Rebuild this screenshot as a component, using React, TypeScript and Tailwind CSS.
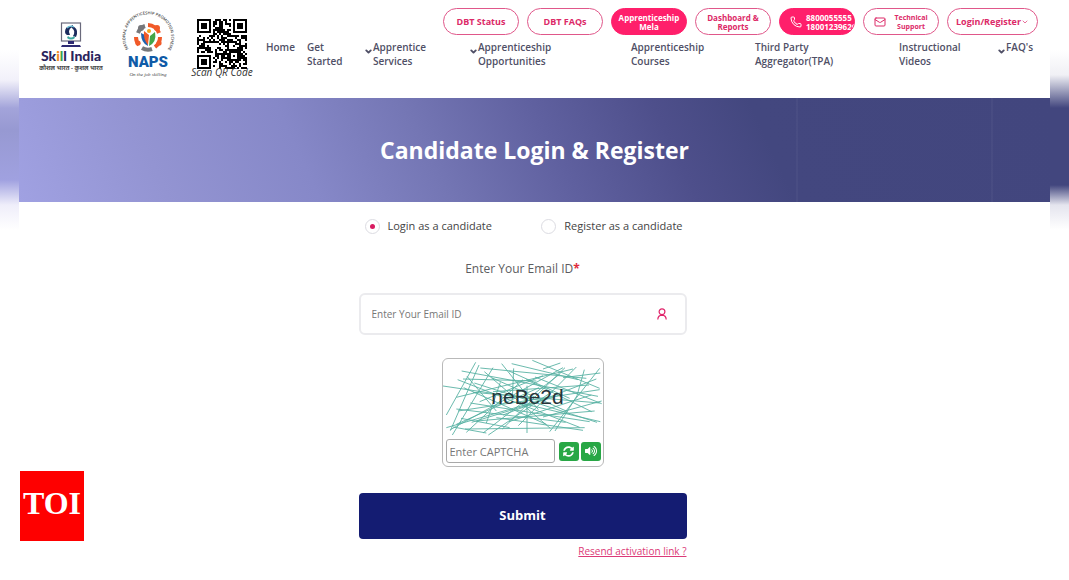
import type { ReactNode } from 'react';
import { useState } from 'react';
import { FaSyncAlt, FaVolumeUp } from 'react-icons/fa';
import { ChevronDown, Mail, Phone } from 'lucide-react';

// ============================================================================
// Data
// ============================================================================

interface NavItem {
  label: ReactNode;
  name: string;
  dropdown?: boolean;
}

const NAV_ITEMS: NavItem[] = [
  { name: 'home', label: 'Home' },
  { name: 'start', label: <>Get<br />Started</> },
  { name: 'services', label: <>Apprentice<br />Services</>, dropdown: true },
  { name: 'opportunities', label: <>Apprenticeship<br />Opportunities</>, dropdown: true },
  { name: 'courses', label: <>Apprenticeship<br />Courses</> },
  { name: 'tpa', label: <>Third Party<br />Aggregator(TPA)</> },
  { name: 'videos', label: <>Instructional<br />Videos</> },
  { name: 'faqs', label: "FAQ's", dropdown: true },
];

// x1, y1, x2, y2
const CAPTCHA_LINES = [
  [0, 81, 290, 124], [10, 168, 98, 10], [22, 215, 108, 18], [44, 62, 410, 205],
  [56, 36, 465, 112], [28, 228, 150, 26], [40, 115, 390, 30], [112, 27, 430, 58],
  [124, 38, 322, 208], [176, 14, 286, 152], [206, 14, 405, 62], [212, 28, 208, 120],
  [22, 212, 360, 26], [62, 86, 310, 196], [10, 206, 300, 122], [45, 156, 470, 92],
  [40, 150, 368, 190], [94, 72, 462, 190], [120, 222, 352, 44], [136, 228, 330, 96],
  [130, 192, 172, 70], [178, 210, 366, 26], [198, 188, 445, 108], [252, 80, 252, 222],
  [268, 4, 470, 88], [300, 30, 352, 12], [276, 54, 476, 134], [320, 218, 470, 28],
  [336, 216, 402, 110], [402, 110, 424, 32], [360, 56, 472, 42], [90, 100, 470, 132],
  [100, 186, 455, 156], [66, 210, 425, 206], [82, 132, 440, 188], [146, 56, 374, 158],
  [40, 196, 288, 86], [70, 220, 240, 62], [226, 200, 400, 24], [180, 168, 460, 60],
  [160, 176, 420, 214], [60, 60, 280, 66], [198, 36, 380, 118], [54, 178, 200, 206],
  [72, 52, 160, 156], [222, 130, 472, 188], [110, 128, 300, 50], [250, 62, 446, 158],
  [86, 190, 352, 108], [150, 98, 438, 78], [30, 204, 130, 222], [300, 174, 476, 126],
];

const QR_SIZE = 25;

// ============================================================================
// Helpers
// ============================================================================

function isDarkModule(x: number, y: number) {
  const corners = [[0, 0], [QR_SIZE - 7, 0], [0, QR_SIZE - 7]];
  for (const [cx, cy] of corners) {
    const dx = x - cx;
    const dy = y - cy;
    if (dx >= -1 && dx <= 7 && dy >= -1 && dy <= 7) {
      const ring = Math.max(Math.abs(dx - 3), Math.abs(dy - 3));
      return ring === 3 || ring <= 1;
    }
  }
  const align = Math.max(Math.abs(x - 18), Math.abs(y - 18));
  if (align <= 2) return align !== 1;
  const n = Math.sin(x * 12.9898 + y * 78.233) * 43758.5453;
  return n - Math.floor(n) > 0.45;
}

// ============================================================================
// Logos and drawings
// ============================================================================

function SkillIndiaLogo() {
  return (
    <div className="flex w-[60px] flex-col items-center">
      <svg viewBox="0 0 22 26" className="h-[26px] w-[22px]" aria-hidden="true">
        <rect x="1.5" y="1" width="19" height="18" fill="#fff" stroke="#6a6a7c" strokeWidth="1.2" />
        <path d="M5 10 Q5 4 11 4 L13 3 L13 5 Q9 6 9 10 L10 13 L7 13 Q5 12 5 10Z" fill="#1c2c5e" />
        <path d="M12 4 Q18 6 17 12 L16 15 L13 14 Q16 9 12 6Z" fill="#1c2c5e" />
        <path d="M8 14 Q11 17 14 14 L15 16 Q11 19 7 16Z" fill="#3ba7a0" />
        <path d="M7 6 Q10 3 14 5" fill="none" stroke="#6fc5da" strokeWidth="1.2" />
        <path d="M8 19h6v3H8z M2 23h18l1 2H1z" fill="#2e2a72" />
      </svg>
      <p className="font-['Lato',sans-serif] text-[14px] leading-4 font-black whitespace-nowrap text-[#29235c]">
        Sk<span className="text-[#f08a24]">i</span>
        <span className="text-[#3fa34d]">l</span>l India
      </p>
      <p className="text-[6px] leading-[9px] font-bold whitespace-nowrap text-[#444]">कौशल भारत - कुशल भारत</p>
    </div>
  );
}

function NapsLogo() {
  return (
    <div className="flex w-[54px] flex-col items-center">
      <svg viewBox="0 0 54 42" className="h-[42px] w-[54px]" aria-hidden="true">
        <path id="naps-arc" d="M7.5 38 A23 23 0 1 1 47 38" fill="none" />
        <text fontSize="4" fontWeight="600" fill="#444">
          <textPath href="#naps-arc">NATIONAL APPRENTICESHIP PROMOTION SCHEME</textPath>
        </text>
        <g fill="none" strokeWidth="4">
          <path d="M17 22 A11 11 0 0 1 24 15" stroke="#77787b" />
          <path d="M27 14 A12 12 0 0 1 38 22" stroke="#f15a29" />
          <path d="M39 26 A12 12 0 0 1 34 36" stroke="#f15a29" />
          <path d="M31 38 A12 12 0 0 1 21 37" stroke="#77787b" />
          <path d="M18 34 A12 12 0 0 1 15 26" stroke="#f15a29" />
        </g>
        <circle cx="20" cy="17" r="3" fill="#77787b" />
        <circle cx="36" cy="17" r="3" fill="#f15a29" />
        <circle cx="38" cy="32" r="2.6" fill="#f15a29" />
        <circle cx="17" cy="32" r="2.6" fill="#f15a29" />
        <path d="M20 22 L26 25 L27 35 Q20 32 20 22Z" fill="#1d63b0" />
        <path d="M23 20 L28 24 L27 34 Q22 28 23 20Z" fill="#f15a29" />
        <path d="M34 21 L29 25 L28 35 Q36 31 34 21Z" fill="#44a548" />
        <circle cx="28" cy="20" r="2" fill="#f6a51c" />
      </svg>
      <p className="font-['Roboto',sans-serif] text-[15px] leading-[19px] font-black text-[#0f5ba7]">NAPS</p>
      <p className="font-['Liberation_Serif',serif] text-[5px] leading-[6px] whitespace-nowrap text-[#444] italic">
        On the job skilling
      </p>
    </div>
  );
}

function QrCode() {
  const modules: ReactNode[] = [];
  for (let y = 0; y < QR_SIZE; y++) {
    for (let x = 0; x < QR_SIZE; x++) {
      if (isDarkModule(x, y)) modules.push(<rect key={`${x}-${y}`} x={x} y={y} width="1" height="1" />);
    }
  }
  return (
    <svg viewBox="0 0 25 25" className="h-[50px] w-[50px]" shapeRendering="crispEdges" role="img" aria-label="QR">
      {modules}
    </svg>
  );
}

function UserIcon() {
  return (
    <svg viewBox="0 0 10 12" className="h-3 w-[10px]" fill="none" stroke="#e0246a" strokeWidth="1.2" aria-hidden="true">
      <circle cx="5" cy="3.8" r="2.9" />
      <path d="M0.8 11.5 Q1 7.4 5 7.2 Q9 7.4 9.2 11.5" />
    </svg>
  );
}

function EdgeStrip({ className }: { className: string }) {
  return <div className={`h-[240px] w-[19px] shrink-0 ${className}`} />;
}

// ============================================================================
// Header
// ============================================================================

const PILL =
  'flex h-[27px] w-[76px] shrink-0 items-center overflow-hidden rounded-full border text-center font-bold';
const PILL_OUTLINE = 'border-[#e0578a] bg-white text-[#dc2a68]';
const PILL_SOLID = 'border-[#ff1f6b] bg-[#ff1f6b] text-white';

function Header() {
  return (
    <header className="flex h-[98px] items-start pr-3">
      <div className="flex w-[247px] shrink-0 pl-[22px]">
        <div className="pt-[22px]">
          <SkillIndiaLogo />
        </div>
        <div className="ml-5 pt-[11px]">
          <NapsLogo />
        </div>
        <div className="ml-4 flex w-[62px] flex-col items-center pt-[19px]">
          <QrCode />
          <p className="text-[10px] leading-[7px] whitespace-nowrap text-[#333] italic">Scan QR Code</p>
        </div>
      </div>

      <div className="min-w-0 flex-1 pt-2">
        <div className="flex justify-end gap-2">
          <button className={`${PILL} ${PILL_OUTLINE} justify-center text-[9px]`}>DBT Status</button>
          <button className={`${PILL} ${PILL_OUTLINE} justify-center text-[9px]`}>DBT FAQs</button>
          <button className={`${PILL} ${PILL_SOLID} justify-center text-[8px] leading-[9px]`}>
            Apprenticeship<br />Mela
          </button>
          <button className={`${PILL} ${PILL_OUTLINE} justify-center text-[8px] leading-[9px]`}>
            Dashboard &amp;<br />Reports
          </button>
          <button className={`${PILL} ${PILL_SOLID} gap-1 pl-[10px] text-[8px] leading-[9px]`}>
            <Phone className="h-3 w-3 shrink-0" strokeWidth={2} />
            <span className="text-left">8800055555<br />18001239626</span>
          </button>
          <button className={`${PILL} ${PILL_OUTLINE} justify-center gap-2 text-[7px] leading-[9px]`}>
            <Mail className="h-3 w-3 shrink-0" strokeWidth={2} />
            <span>Technical<br />Support</span>
          </button>
          <button className="flex h-[27px] w-[91px] shrink-0 items-center justify-center rounded-full border border-[#e0578a] bg-white text-[9px] font-bold text-[#dc2a68]">
            Login/Register
            <ChevronDown className="h-2 w-2" strokeWidth={2} />
          </button>
        </div>

        <nav className="mt-[5px] grid grid-cols-[41fr_57fr_105fr_162fr_124fr_144fr_98fr_41fr] text-[10px] leading-[14px] font-semibold text-[#4f4f66]">
          {NAV_ITEMS.map((item) => (
            <a key={item.name} href="#" className="flex items-start whitespace-nowrap">
              {item.dropdown && <ChevronDown className="mt-[7px] h-[9px] w-[9px] shrink-0" strokeWidth={5} />}
              <span>{item.label}</span>
            </a>
          ))}
        </nav>
      </div>
    </header>
  );
}

// ============================================================================
// Form
// ============================================================================

const RADIO =
  "grid size-[15px] appearance-none place-items-center rounded-full border border-[#dcdce2] bg-white before:size-[5px] before:rounded-full before:content-[''] checked:before:bg-[#d81b60]";

function Captcha() {
  return (
    <div className="mx-auto mt-[23px] w-[162px] rounded-md border border-[#b9b9b9] bg-white">
      <div className="relative h-[80px]">
        <svg viewBox="0 0 480 240" className="h-full w-full" stroke="#2a9d8a" strokeWidth="2.6" opacity="0.8" aria-hidden="true">
          {CAPTCHA_LINES.map(([x1, y1, x2, y2], i) => (
            <line key={i} x1={x1} y1={y1} x2={x2} y2={y2} />
          ))}
        </svg>
        <span className="absolute inset-0 flex items-center justify-center pb-1 pl-[10px] font-['Liberation_Sans',sans-serif] text-[21px] text-[#263238]">
          neBe2d
        </span>
      </div>
      <div className="flex items-center gap-[2px] pb-[3px] pl-[3px]">
        <input
          aria-label="Captcha"
          placeholder="Enter CAPTCHA"
          className="mr-[2px] h-6 w-[109px] rounded-[3px] border border-[#a9a9a9] px-[3px] text-[11px] placeholder:text-[#777]"
        />
        <button aria-label="Refresh" className="flex h-[19px] w-[20px] items-center justify-center rounded-[3px] bg-[#28a745] text-white">
          <FaSyncAlt className="size-[11px]" />
        </button>
        <button aria-label="Listen" className="flex h-[19px] w-[20px] items-center justify-center rounded-[3px] bg-[#28a745] text-white">
          <FaVolumeUp className="size-[12px]" />
        </button>
      </div>
    </div>
  );
}

function LoginForm() {
  const [mode, setMode] = useState('login');

  return (
    <form className="mx-auto w-[328px] max-w-full pt-4" onSubmit={(e) => e.preventDefault()}>
      <div className="flex items-center justify-between pr-[4px] pl-[6px] text-[11px] leading-4 text-[#444]">
        <label className="flex items-center gap-2">
          <input type="radio" name="mode" className={RADIO} checked={mode === 'login'} onChange={() => setMode('login')} />
          Login as a candidate
        </label>
        <label className="flex items-center gap-2">
          <input type="radio" name="mode" className={RADIO} checked={mode === 'register'} onChange={() => setMode('register')} />
          Register as a candidate
        </label>
      </div>

      <label htmlFor="email" className="mt-[25px] block text-center text-[12px] leading-5 text-[#5c5c60]">
        Enter Your Email ID<span className="font-bold text-[#e02b3c]">*</span>
      </label>
      <div className="mt-[14px] flex h-[42px] items-center rounded-md border-2 border-[#ebebee] pr-[18px] pl-[11px]">
        <input
          id="email"
          type="email"
          placeholder="Enter Your Email ID"
          className="min-w-0 flex-1 text-[10px] outline-none placeholder:text-[#777]"
        />
        <UserIcon />
      </div>

      <Captcha />

      <button type="submit" className="mt-[26px] h-[46px] w-full rounded-[4px] bg-[#141c72] text-[13px] font-bold text-white">
        Submit
      </button>
      <div className="mt-1 text-right text-[10px] leading-4">
        <a href="#" className="text-[#dc3a78] underline">Resend activation link ?</a>
      </div>
    </form>
  );
}

// ============================================================================
// Page
// ============================================================================

export default function App() {
  return (
    <div className="relative flex min-h-screen bg-white font-['Open_Sans','Noto_Sans',sans-serif]">
      <EdgeStrip className="bg-[linear-gradient(180deg,#fff_50px,#f2f1fa_80px,#a3a4da_108px,#9799d2_130px,#a0a1e0_180px,#efeefa_205px,#fff_230px)]" />

      <main className="min-w-0 flex-1">
        <Header />
        <section className="flex h-[104px] items-center justify-center bg-[linear-gradient(90deg,transparent_75.4%,#ffffff08_75.4%,#ffffff08_75.6%,transparent_75.6%,transparent_94.3%,#ffffff08_94.3%,#ffffff08_94.5%,transparent_94.5%),linear-gradient(65deg,#a0a1e2_0%,#9394d2_14%,#8688c8_28%,#7476b4_40%,#5f609f_52%,#4e4f8b_63%,#43477f_72%,#42467e_100%)]">
          <h1 className="text-[23px] font-bold text-white">Candidate Login &amp; Register</h1>
        </section>
        <div className="pr-6">
          <LoginForm />
        </div>
      </main>

      <EdgeStrip className="bg-[linear-gradient(180deg,#fff_50px,#f0f0f5_75px,#42467e_108px,#42467e_185px,#e4e4ee_205px,#fff_230px)]" />

      {/* Publisher badge */}
      <div className="absolute bottom-[39px] left-5 flex h-[70px] w-16 justify-center bg-[#fe0000] pt-[14px] font-['Liberation_Serif',serif] text-[32px] leading-9 font-bold text-white">
        TOI
      </div>
    </div>
  );
}
